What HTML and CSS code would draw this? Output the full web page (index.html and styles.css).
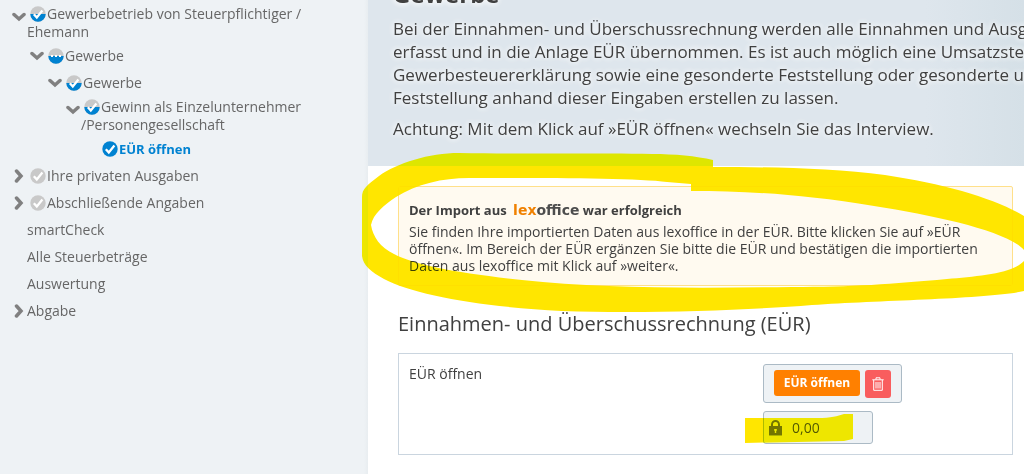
FILE: index.html
```
<!DOCTYPE html>
<html lang="de">
<head>
<meta charset="utf-8">
<title>Gewerbe</title>
<link rel="stylesheet" href="styles.css">
</head>
<body>
<svg class="defs" aria-hidden="true">
  <defs>
    <symbol id="chevron-down" viewBox="0 0 14 10"><path d="M2 2.500 7 7l5-4.500" fill="none" stroke="#808080" stroke-width="3.500" stroke-linecap="round"/></symbol>
    <symbol id="chevron-right" viewBox="0 0 10 14"><path d="M2.500 2 7 7l-4.500 5" fill="none" stroke="#808080" stroke-width="3.500" stroke-linecap="round"/></symbol>
    <symbol id="check-half" viewBox="0 0 16 16"><circle cx="8" cy="8" r="7.700" fill="#c9c9c9"/><path d="M.3 8a7.700 7.700 0 0 0 15.400 0z" fill="#0082d1"/><path d="m3.800 8.200 3 3.200 5.600-6.800" fill="none" stroke="#fff" stroke-width="2.300"/></symbol>
    <symbol id="dots-half" viewBox="0 0 16 16"><circle cx="8" cy="8" r="7.700" fill="#c9c9c9"/><path d="M.3 8a7.700 7.700 0 0 0 15.400 0z" fill="#0082d1"/><path d="M3 7h2v2H3zM7 7h2v2H7zM11 7h2v2h-2z" fill="#fff"/></symbol>
    <symbol id="check-full" viewBox="0 0 16 16"><circle cx="8" cy="8" r="7.700" fill="#0082d1"/><path d="m3.800 8.200 3 3.200 5.600-6.800" fill="none" stroke="#fff" stroke-width="2.300"/></symbol>
    <symbol id="check-open" viewBox="0 0 16 16"><circle cx="8" cy="8" r="7.700" fill="#c9c9c9"/><path d="m3.800 8.200 3 3.200 5.600-6.800" fill="none" stroke="#fff" stroke-width="2.300"/></symbol>
  </defs>
</svg>
<div class="app">
  <nav class="sidebar" aria-label="Navigation">
    <ul class="tree">
      <li class="node tall"><svg class="chev"><use href="#chevron-down"/></svg><a href="#"><svg class="state"><use href="#check-half"/></svg>Gewerbebetrieb von Steuerpflichtiger /<br>Ehemann</a></li>
      <li class="node level-1"><svg class="chev"><use href="#chevron-down"/></svg><a href="#"><svg class="state"><use href="#dots-half"/></svg>Gewerbe</a></li>
      <li class="node level-2 tight"><svg class="chev"><use href="#chevron-down"/></svg><a href="#"><svg class="state"><use href="#check-half"/></svg>Gewerbe</a></li>
      <li class="node level-3 tall"><svg class="chev"><use href="#chevron-down"/></svg><a href="#"><svg class="state"><use href="#check-half"/></svg>Gewinn als Einzelunternehmer<br>/Personengesellschaft</a></li>
      <li class="node level-4"><a href="#" class="current" aria-current="page"><svg class="state"><use href="#check-full"/></svg>EÜR öffnen</a></li>
      <li class="node"><svg class="chev"><use href="#chevron-right"/></svg><a href="#"><svg class="state"><use href="#check-open"/></svg>Ihre privaten Ausgaben</a></li>
      <li class="node"><svg class="chev"><use href="#chevron-right"/></svg><a href="#"><svg class="state"><use href="#check-open"/></svg>Abschließende Angaben</a></li>
      <li class="node leaf"><a href="#">smartCheck</a></li>
      <li class="node leaf"><a href="#">Alle Steuerbeträge</a></li>
      <li class="node leaf"><a href="#">Auswertung</a></li>
      <li class="node"><svg class="chev"><use href="#chevron-right"/></svg><a href="#">Abgabe</a></li>
    </ul>
  </nav>
  <main class="main">
    <header class="hero">
      <h1>Gewerbe</h1>
      <p>Bei der Einnahmen- und Überschussrechnung werden alle Einnahmen und Ausgaben<br>erfasst und in die Anlage EÜR übernommen. Es ist auch möglich eine Umsatzsteuer-,<br>Gewerbesteuererklärung sowie eine gesonderte Feststellung oder gesonderte und<br>Feststellung anhand dieser Eingaben erstellen zu lassen.</p>
      <p>Achtung: Mit dem Klick auf »EÜR öffnen« wechseln Sie das Interview.</p>
    </header>
    <div class="content">
      <section class="notice">
        <h2>Der Import aus <span class="brand"><span class="brand-lex">lex</span>office</span> war erfolgreich</h2>
        <p>Sie finden Ihre importierten Daten aus lexoffice in der EÜR. Bitte klicken Sie auf »EÜR<br>öffnen«. Im Bereich der EÜR ergänzen Sie bitte die EÜR und bestätigen die importierten<br>Daten aus lexoffice mit Klick auf »weiter«.</p>
      </section>
      <h2 class="title">Einnahmen- und Überschussrechnung (EÜR)</h2>
      <section class="panel">
        <label class="panel-label" for="amount">EÜR öffnen</label>
        <div class="controls">
          <div class="actions">
            <button class="open" type="button">EÜR öffnen</button>
            <button class="delete" type="button" aria-label="Löschen">
              <svg width="12" height="14" viewBox="0 0 12 14" fill="none" stroke="#fff"><path d="M4 2.500V.8h4v1.700M.3 2.800h11.400M1.700 3v10.300h8.600V3M4 5v6.500M6 5v6.500M8 5v6.500"/></svg>
            </button>
          </div>
          <div class="amount">
            <svg width="13" height="16" viewBox="0 0 13 16"><path d="M3 7V4.500a3.500 3.500 0 0 1 7 0V7" fill="none" stroke="#73756b" stroke-width="2"/><path fill="#73756b" fill-rule="evenodd" d="M0 6h13v9.500H0zM5.200 9h2.600v1.500l-.6.600V13H5.800v-1.900l-.6-.6z"/></svg>
            <input id="amount" type="text" value="0,00" readonly>
          </div>
        </div>
      </section>
    </div>
    <svg class="marker" viewBox="0 0 664 474" aria-hidden="true" fill="#ffe600">
      <path fill-rule="evenodd" d="M351 160C334 156 313 154 290 154C240 153 160 154 97 153C67 153 35 163 17 176C5 185 0 189 0 197V256C1 265 9 272 22 279C52 295 120 307 200 311C285 314 390 310 450 305C520 300 625 299 662 291V216C634 199 584 184 523 175C470 168 405 167 351 167ZM329 184V191C385 191 440 194 512 206C575 216 645 231 662 250V261C650 274 615 276 585 279C530 284 490 287 430 287C335 288 240 289 160 280C95 273 53 265 32 254C18 247 11 237 9 225C11 214 22 205 34 197C55 184 80 178 107 178C180 178 275 178 305 182Z"/>
      <path d="M383 418H455C470 418 475 416 482 414H491V439L482 441L383 443Z"/>
    </svg>
  </main>
</div>
</body>
</html>
```
FILE: styles.css
```
* { box-sizing: border-box; }
body {
  margin: 0;
  padding-right: 12px;
  background: #fff;
  color: #404040;
  font: 14px/18px "Open Sans", sans-serif;
}
h1, h2, p, ul { margin: 0; padding: 0; }
.defs { display: none; }
.app { display: flex; min-height: 100vh; overflow: hidden; }

.sidebar {
  flex: 0 0 368px;
  padding: 5px 12px;
  background: linear-gradient(to right, #eef2f5 364px, #e8edf0 368px);
}
.tree { list-style: none; }
.node { display: flex; align-items: flex-start; gap: 1px; margin-bottom: 9px; }
.node a { color: #666; text-decoration: none; }
.tall, .tight { margin-bottom: 6px; }
.level-1 { padding-left: 18px; }
.level-2 { padding-left: 36px; }
.level-3 { padding-left: 54px; }
.level-4 { padding-left: 87px; }
.leaf { padding-left: 15px; }
.chev { flex: none; width: 14px; height: 14px; margin-top: 2px; }
.tall .chev { margin-top: 5px; }
.state { width: 16px; height: 16px; margin: 0 1px 0 3px; vertical-align: -3px; }
.node .current { color: #0082d1; font-size: 13px; font-weight: 700; }

.main { position: relative; flex: 1; min-width: 0; }
.hero {
  height: 166px;
  padding-left: 25px;
  overflow: hidden;
  background: linear-gradient(to right, #dee6ed 85%, #d5e0e7);
  font-size: 17px;
  line-height: 23px;
  white-space: nowrap;
  text-shadow: 0 0 6px #fff, 0 0 6px #fff;
}
.hero h1 { margin: -21px 0 8px; font-size: 24px; line-height: 30px; }
.hero p { margin-bottom: 8px; }

.content { padding: 20px 11px 19px 30px; }
.notice {
  padding: 14px 10px 11px;
  border: 1px solid #ffe08a;
  border-radius: 2px;
  background: #fffaf0;
}
.notice h2 { margin-bottom: 4px; font-size: 13px; line-height: 18px; }
.notice p { line-height: 17px; }
.brand { margin-left: 3px; color: #4d4d4d; font: 700 14px/12px "DejaVu Sans", sans-serif; }
.brand-lex { color: #f08000; }
.title { margin: 25px 0 16px; font-size: 20px; line-height: 26px; font-weight: 400; }
.panel {
  display: grid;
  grid-template-columns: 354px 1fr;
  padding: 10px;
  border: 1px solid #cad5df;
}
.panel-label { padding-top: 1px; }
.controls { display: flex; flex-direction: column; align-items: flex-start; gap: 8px; }
.actions, .amount { border: 1px solid #abbac5; border-radius: 3px; background: #eef2f5; }
.actions { display: flex; align-items: flex-start; gap: 5px; height: 39px; padding: 5px 10px; }
button { padding: 0; border: 0; border-radius: 3px; color: #fff; }
.open { width: 86px; height: 26px; background: #ff8000; font: 700 12px/26px "Open Sans", sans-serif; }
.delete { display: grid; place-items: center; width: 26px; height: 28px; background: #f95d5e; }
.amount { display: flex; align-items: center; gap: 10px; width: 110px; height: 33px; padding: 0 5px; }
.amount input { width: 70px; padding: 0; border: 0; background: none; color: #555; font: 14px/20px "Open Sans", sans-serif; }
.marker {
  position: absolute;
  top: 0;
  left: -6px;
  width: 664px;
  height: 474px;
  mix-blend-mode: darken;
  pointer-events: none;
}
```
